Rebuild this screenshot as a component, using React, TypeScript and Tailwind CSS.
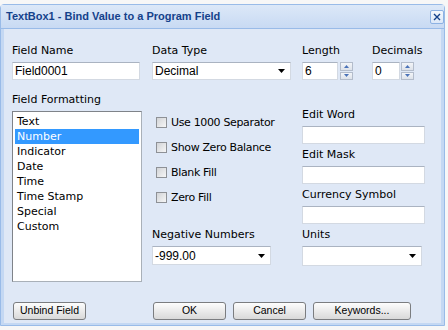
import React from 'react';

const label = "font-['DejaVu_Sans',sans-serif] text-[11px] leading-[16px] text-black h-[16px] whitespace-nowrap";
const field =
  "h-[18px] bg-white border border-[#d3d9e2] border-t-[#aab3c1] font-['Liberation_Sans',Arial,sans-serif] text-[12px] leading-[16px] text-black px-[2px] whitespace-nowrap overflow-hidden";

function Caret() {
  return (
    <svg width="7" height="4" viewBox="0 0 7 4">
      <polygon points="0,0 7,0 3.5,4" fill="#000" />
    </svg>
  );
}

function Select({ value, width }: { value: string; width: string }) {
  return (
    <div className={`${field} ${width} flex items-center justify-between pr-[5px]`}>
      <span>{value}</span>
      <Caret />
    </div>
  );
}

function Spinner() {
  return (
    <div className="flex h-[18px] w-[13px] flex-col gap-px">
      {[0, 1].map((i) => (
        <div
          key={i}
          className="flex flex-1 items-center justify-center border border-[#b3bccb] bg-gradient-to-b from-[#f3f5f8] to-[#dde2ea]"
        >
          <svg width="5" height="3" viewBox="0 0 5 3">
            <polygon points={i === 0 ? '0,3 5,3 2.5,0' : '0,0 5,0 2.5,3'} fill="#4a72b8" />
          </svg>
        </div>
      ))}
    </div>
  );
}

function Check({ text }: { text: string }) {
  return (
    <div className="flex h-[17px] items-center">
      <span className="ml-[4px] h-[11px] w-[11px] border border-[#8e9196] bg-gradient-to-br from-[#d2d4d7] to-[#f6f6f6]" />
      <span className={`${label} ml-[4px] tracking-[-0.35px]`}>{text}</span>
    </div>
  );
}

function Button({ text, width }: { text: string; width: string }) {
  return (
    <div
      className={`${width} flex h-[18px] items-center justify-center rounded-[3px] border border-[#7b7d80] bg-gradient-to-b from-[#fdfdfd] to-[#d9d9d9] font-['Liberation_Sans',Arial,sans-serif] text-[10.5px] text-black`}
    >
      {text}
    </div>
  );
}

const formats = ['Text', 'Number', 'Indicator', 'Date', 'Time', 'Time Stamp', 'Special', 'Custom'];

export default function App() {
  return (
    <div className="h-[330px] w-[448px] bg-[#f7f7f7] pt-[4px]">
      <div className="w-[445px] rounded-t-[4px] border border-[#99bbe8] bg-[#c4d8f3]">
        <div className="flex h-[24px] items-center justify-between border-b border-[#99bbe8] bg-gradient-to-b from-[#dce8f8] to-[#c8daf3] pl-[5px] pr-[0px]">
          <span className="font-['Liberation_Sans',Arial,sans-serif] text-[11px] font-bold text-[#15428b]">
            TextBox1 - Bind Value to a Program Field
          </span>
          <div className="flex h-[14px] w-[14px] items-center justify-center rounded-[2px] border border-[#8db2e3] bg-gradient-to-b from-[#f4f8fd] to-[#dce8f8]">
            <svg width="8" height="8" viewBox="0 0 8 8">
              <path d="M1 1 L7 7 M7 1 L1 7" stroke="#15428b" strokeWidth="1.4" />
            </svg>
          </div>
        </div>

        <div className="mx-[3px] mb-[2px] bg-[#dfe8f6] pb-[3px] pl-[8px] pt-[14px]">
          <div className="flex items-start">
            <div className="w-[130px]">
              <div className={label}>Field Name</div>
              <div className={`${field} mt-[3px] w-[128px]`}>Field0001</div>
              <div className={`${label} mt-[12px]`}>Field Formatting</div>
              <div className="mt-[3px] h-[171px] w-[130px] border border-[#a9b0b8] border-l-[#7f8389] border-t-[#7f8389] bg-white px-[2px] pt-[2px]">
                {formats.map((f) => (
                  <div
                    key={f}
                    className={`h-[15px] pl-[2px] font-['DejaVu_Sans',sans-serif] text-[11px] leading-[15px] ${
                      f === 'Number' ? 'bg-[#3399ff] text-white' : 'text-black'
                    }`}
                  >
                    {f}
                  </div>
                ))}
              </div>
            </div>

            <div className="ml-[10px] w-[140px]">
              <div className={label}>Data Type</div>
              <div className="mt-[3px]">
                <Select value="Decimal" width="w-[139px]" />
              </div>
              <div className="mt-[34px] flex flex-col gap-[8px]">
                <Check text="Use 1000 Separator" />
                <Check text="Show Zero Balance" />
                <Check text="Blank Fill" />
                <Check text="Zero Fill" />
              </div>
              <div className={`${label} mt-[21px]`}>Negative Numbers</div>
              <div className="mt-[3px]">
                <Select value="-999.00" width="w-[119px] h-[19px]" />
              </div>
            </div>

            <div className="ml-[10px] w-[124px]">
              <div className="flex">
                <div className="w-[70px]">
                  <div className={label}>Length</div>
                  <div className="mt-[3px] flex gap-[2px]">
                    <div className={`${field} w-[36px]`}>6</div>
                    <Spinner />
                  </div>
                </div>
                <div>
                  <div className={label}>Decimals</div>
                  <div className="mt-[3px] flex gap-px">
                    <div className={`${field} w-[28px]`}>0</div>
                    <Spinner />
                  </div>
                </div>
              </div>
              <div className={`${label} mt-[27px]`}>Edit Word</div>
              <div className={`${field} mt-[3px] w-[123px]`} />
              <div className={`${label} mt-[3px]`}>Edit Mask</div>
              <div className={`${field} mt-[3px] w-[123px]`} />
              <div className={`${label} mt-[3px]`}>Currency Symbol</div>
              <div className={`${field} mt-[3px] w-[123px]`} />
              <div className={`${label} mt-[3px]`}>Units</div>
              <div className="mt-[3px]">
                <Select value="" width="w-[120px] h-[20px]" />
              </div>
            </div>
          </div>

          <div className="mt-[20px] flex">
            <div className="ml-px">
              <Button text="Unbind Field" width="w-[73px]" />
            </div>
            <div className="ml-[67px] flex gap-[7px]">
              <Button text="OK" width="w-[73px]" />
              <Button text="Cancel" width="w-[73px]" />
              <Button text="Keywords..." width="w-[98px]" />
            </div>
          </div>
        </div>
      </div>
    </div>
  );
}
